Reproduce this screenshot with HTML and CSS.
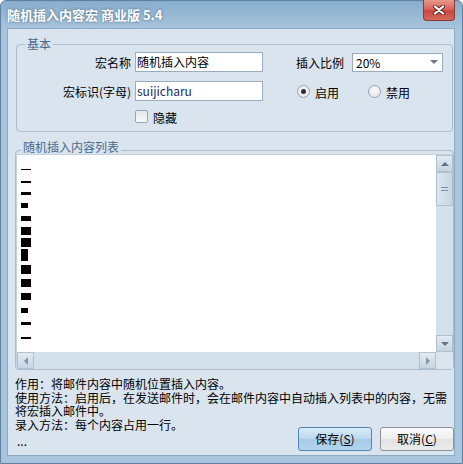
FILE: index.html
```html
<!DOCTYPE html>
<html lang="zh-CN">
<head>
<meta charset="utf-8">
<title>随机插入内容宏 商业版 5.4</title>
<link rel="stylesheet" href="styles.css">
</head>
<body>
<div class="window">
  <div class="titlebar">
    <span class="title">随机插入内容宏 商业版 5.4</span>
    <button class="close" aria-label="关闭">
      <svg width="12" height="10" viewBox="0 0 12 10">
        <path d="M2 1.5 L10 8.5 M10 1.5 L2 8.5" stroke="#6a2a24" stroke-width="4.2" stroke-linecap="round" fill="none"/>
        <path d="M2 1.5 L10 8.5 M10 1.5 L2 8.5" stroke="#ffffff" stroke-width="2.2" stroke-linecap="round" fill="none"/>
      </svg>
    </button>
  </div>
  <div class="client">
    <fieldset class="group basic">
      <legend>基本</legend>
      <div class="row">
        <label class="lbl">宏名称</label>
        <div class="field">随机插入内容</div>
        <div class="side">
          <span>插入比例</span>
          <div class="select"><span>20%</span><span class="caret"></span></div>
        </div>
      </div>
      <div class="row">
        <label class="lbl">宏标识(字母)</label>
        <div class="field en">suijicharu</div>
        <div class="side radios">
          <span class="radio on"></span><span class="rtext">启用</span>
          <span class="radio second"></span><span class="rtext">禁用</span>
        </div>
      </div>
      <div class="row row3">
        <span class="check"></span><span class="ctext">隐藏</span>
      </div>
    </fieldset>

    <fieldset class="group listgroup">
      <legend>随机插入内容列表</legend>
      <div class="listbox">
        <div class="content">
          <div class="mk"></div><div class="mk"></div><div class="mk"></div><div class="mk"></div>
          <div class="mk"></div><div class="mk"></div><div class="mk"></div><div class="mk"></div>
          <div class="mk"></div><div class="mk"></div><div class="mk"></div><div class="mk"></div>
          <div class="mk"></div><div class="mk"></div>
        </div>
        <div class="vscroll">
          <div class="sbtn up"></div>
          <div class="thumb"><span class="grip"></span></div>
          <div class="track"></div>
          <div class="sbtn down"></div>
        </div>
        <div class="hscroll">
          <div class="sbtn left"></div>
          <div class="track"></div>
          <div class="sbtn right"></div>
        </div>
        <div class="corner"></div>
      </div>
    </fieldset>

    <div class="desc">作用：将邮件内容中随机位置插入内容。<br>使用方法：启用后，在发送邮件时，会在邮件内容中自动插入列表中的内容，无需将宏插入邮件中。<br>录入方法：每个内容占用一行。</div>

    <div class="footer">
      <span class="more">...</span>
      <div class="buttons">
        <button class="btn save">保存(<u>S</u>)</button>
        <button class="btn cancel">取消(<u>C</u>)</button>
      </div>
    </div>
  </div>
</div>
</body>
</html>
```

FILE: styles.css
```css
* { box-sizing: border-box; }
html, body { margin: 0; padding: 0; }
body {
  width: 463px;
  height: 464px;
  overflow: hidden;
  font-family: "Noto Sans CJK SC", "Noto Sans", sans-serif;
  font-size: 12px;
  color: #000;
  background: #fff;
}

.window {
  width: 463px;
  height: 464px;
  display: flex;
  flex-direction: column;
  border: 1px solid #5d81a3;
  border-radius: 6px 6px 0 0;
  padding: 0 7px 7px 6px;
  background: linear-gradient(to bottom, #88adcb 0, #a8c5dc 28px, #a9c5db 100%);
}

.titlebar {
  height: 28px;
  display: flex;
  justify-content: space-between;
  align-items: flex-start;
}
.title {
  margin-top: 7px;
  line-height: 14px;
  font-size: 13px;
  font-weight: bold;
  color: #fff;
  text-shadow: 0 0 3px rgba(40, 70, 100, 0.7);
  white-space: nowrap;
}
.close {
  width: 32px;
  height: 21px;
  margin-top: -1px;
  padding: 0;
  border: 1px solid #8b3a33;
  border-top: none;
  border-radius: 0 0 4px 4px;
  background: linear-gradient(to bottom, #e8978e 0, #d9655b 45%, #c8463b 55%, #d56a5f 100%);
  display: flex;
  align-items: center;
  justify-content: center;
}

.client {
  flex: 1;
  display: flex;
  flex-direction: column;
  background: #d9e4ee;
  border: 1px solid #8eabc4;
  padding: 0 0 4px 0;
}

.group {
  min-width: 0;
  border: 1px solid #a9bdcf;
  border-radius: 4px;
}
.group legend {
  padding: 0 2px;
  line-height: 14px;
  color: #4a6b8b;
}

.basic {
  margin: 8px 1px 0 8px;
  padding: 1px 0 8px 0;
}
.basic legend { margin-left: 8px; }

.row {
  display: flex;
  align-items: center;
  height: 20px;
}
.row + .row { margin-top: 9px; }
.row.row3 { margin-top: 8px; height: 14px; }

.lbl {
  width: 114px;
  margin-right: 4px;
  text-align: right;
  white-space: nowrap;
}
.field {
  width: 128px;
  height: 20px;
  border: 1px solid #9aacbd;
  background: #fff;
  padding: 0 1px;
  line-height: 17px;
  white-space: nowrap;
}
.field.en { color: #1b2a66; }

.side {
  margin-left: 33px;
  display: flex;
  align-items: center;
}
.select {
  margin-left: 8px;
  width: 91px;
  height: 19px;
  border: 1px solid #9aacbd;
  background: #fff;
  padding: 0 4px 0 3px;
  display: flex;
  align-items: center;
  justify-content: space-between;
  line-height: 17px;
}
.caret {
  width: 0;
  height: 0;
  border-left: 4px solid transparent;
  border-right: 4px solid transparent;
  border-top: 4px solid #6b7b8b;
}

.radios { margin-left: 34px; }
.radio {
  width: 13px;
  height: 13px;
  border-radius: 50%;
  border: 1px solid #97a4b1;
  background: radial-gradient(circle at 50% 40%, #fbfbfb 0, #e6e9ec 70%, #d8dde2 100%);
  display: flex;
  align-items: center;
  justify-content: center;
}
.radio.on::after {
  content: "";
  width: 5px;
  height: 5px;
  border-radius: 50%;
  background: #2b2f33;
}
.radio.second { margin-left: 29px; }
.rtext { margin-left: 5px; margin-top: 3px; }

.check {
  margin-left: 118px;
  width: 13px;
  height: 13px;
  border: 1px solid #98a5b2;
  border-radius: 2px;
  background: linear-gradient(to bottom, #e3e7eb, #f8f9fa);
}
.ctext { margin-left: 5px; margin-top: 2px; }

.listgroup {
  margin: 8px 0 0 7px;
  padding: 0;
}
.listgroup legend {
  margin-left: 5px;
  padding-bottom: 6px;
}

.listbox {
  margin-top: -6px;
  height: 215px;
  display: grid;
  grid-template-columns: 1fr 17px;
  grid-template-rows: 1fr 17px;
  border-top: 1px solid #c6d3de;
  border-left: 1px solid #c6d3de;
  background: #fff;
}
.content {
  padding: 14px 0 0 4px;
  overflow: hidden;
}
.mk { background: #000; width: 10px; }
.mk:nth-child(1)  { margin-top: 0;    height: 1px; }
.mk:nth-child(2)  { margin-top: 11px; height: 2px; }
.mk:nth-child(3)  { margin-top: 9px;  height: 3px; }
.mk:nth-child(4)  { margin-top: 8px;  height: 5px; width: 7px; }
.mk:nth-child(5)  { margin-top: 8px;  height: 5px; }
.mk:nth-child(6)  { margin-top: 6px;  height: 8px; }
.mk:nth-child(7)  { margin-top: 3px;  height: 9px; }
.mk:nth-child(8)  { margin-top: 2px;  height: 12px; width: 7px; }
.mk:nth-child(9)  { margin-top: 4px;  height: 9px; }
.mk:nth-child(10) { margin-top: 5px;  height: 8px; }
.mk:nth-child(11) { margin-top: 6px;  height: 7px; }
.mk:nth-child(12) { margin-top: 8px;  height: 5px; width: 7px; }
.mk:nth-child(13) { margin-top: 9px;  height: 3px; }
.mk:nth-child(14) { margin-top: 12px; height: 2px; }

.vscroll {
  display: flex;
  flex-direction: column;
  background: #d3dfe9;
}
.hscroll {
  display: flex;
  background: #d3dfe9;
}
.track { flex: 1; }
.corner { background: #dce5ed; }

.sbtn {
  width: 17px;
  height: 17px;
  flex: none;
  border: 1px solid #b0c2d2;
  background: linear-gradient(to bottom, #e2eaf1, #c6d5e2);
  display: flex;
  align-items: center;
  justify-content: center;
}
.sbtn::before {
  content: "";
  width: 0;
  height: 0;
}
.sbtn.up::before {
  border-left: 4px solid transparent;
  border-right: 4px solid transparent;
  border-bottom: 4px solid #5f7489;
}
.sbtn.down::before {
  border-left: 4px solid transparent;
  border-right: 4px solid transparent;
  border-top: 4px solid #5f7489;
}
.sbtn.left::before {
  border-top: 4px solid transparent;
  border-bottom: 4px solid transparent;
  border-right: 4px solid #8497aa;
}
.sbtn.right::before {
  border-top: 4px solid transparent;
  border-bottom: 4px solid transparent;
  border-left: 4px solid #8497aa;
}
.thumb {
  height: 34px;
  flex: none;
  border: 1px solid #b0c2d2;
  background: linear-gradient(to right, #dbe5ee, #c8d7e4);
  display: flex;
  align-items: center;
  justify-content: center;
}
.grip {
  width: 7px;
  height: 4px;
  border-top: 1px solid #7d92a6;
  border-bottom: 1px solid #7d92a6;
}

.desc {
  margin: 7px 0 0 7px;
  line-height: 13.5px;
}

.footer {
  margin: -4px 0 0 9px;
  display: flex;
  align-items: center;
  justify-content: space-between;
}
.more { line-height: 13px; margin-top: 2px; }
.buttons { display: flex; gap: 8px; }
.btn {
  width: 74px;
  height: 24px;
  padding: 0;
  border-radius: 3px;
  font-family: inherit;
  font-size: 12px;
  color: #000;
  line-height: 22px;
}
.btn u { text-underline-offset: 1px; }
.save {
  border: 1px solid #4f86b4;
  background: linear-gradient(to bottom, #d8eaf7 0, #bcd8ee 48%, #a7cbe8 52%, #b3d5ee 100%);
}
.cancel {
  border: 1px solid #8e9296;
  background: linear-gradient(to bottom, #fbfbfb 0, #eeeeee 48%, #e2e2e2 52%, #ececec 100%);
}
```
